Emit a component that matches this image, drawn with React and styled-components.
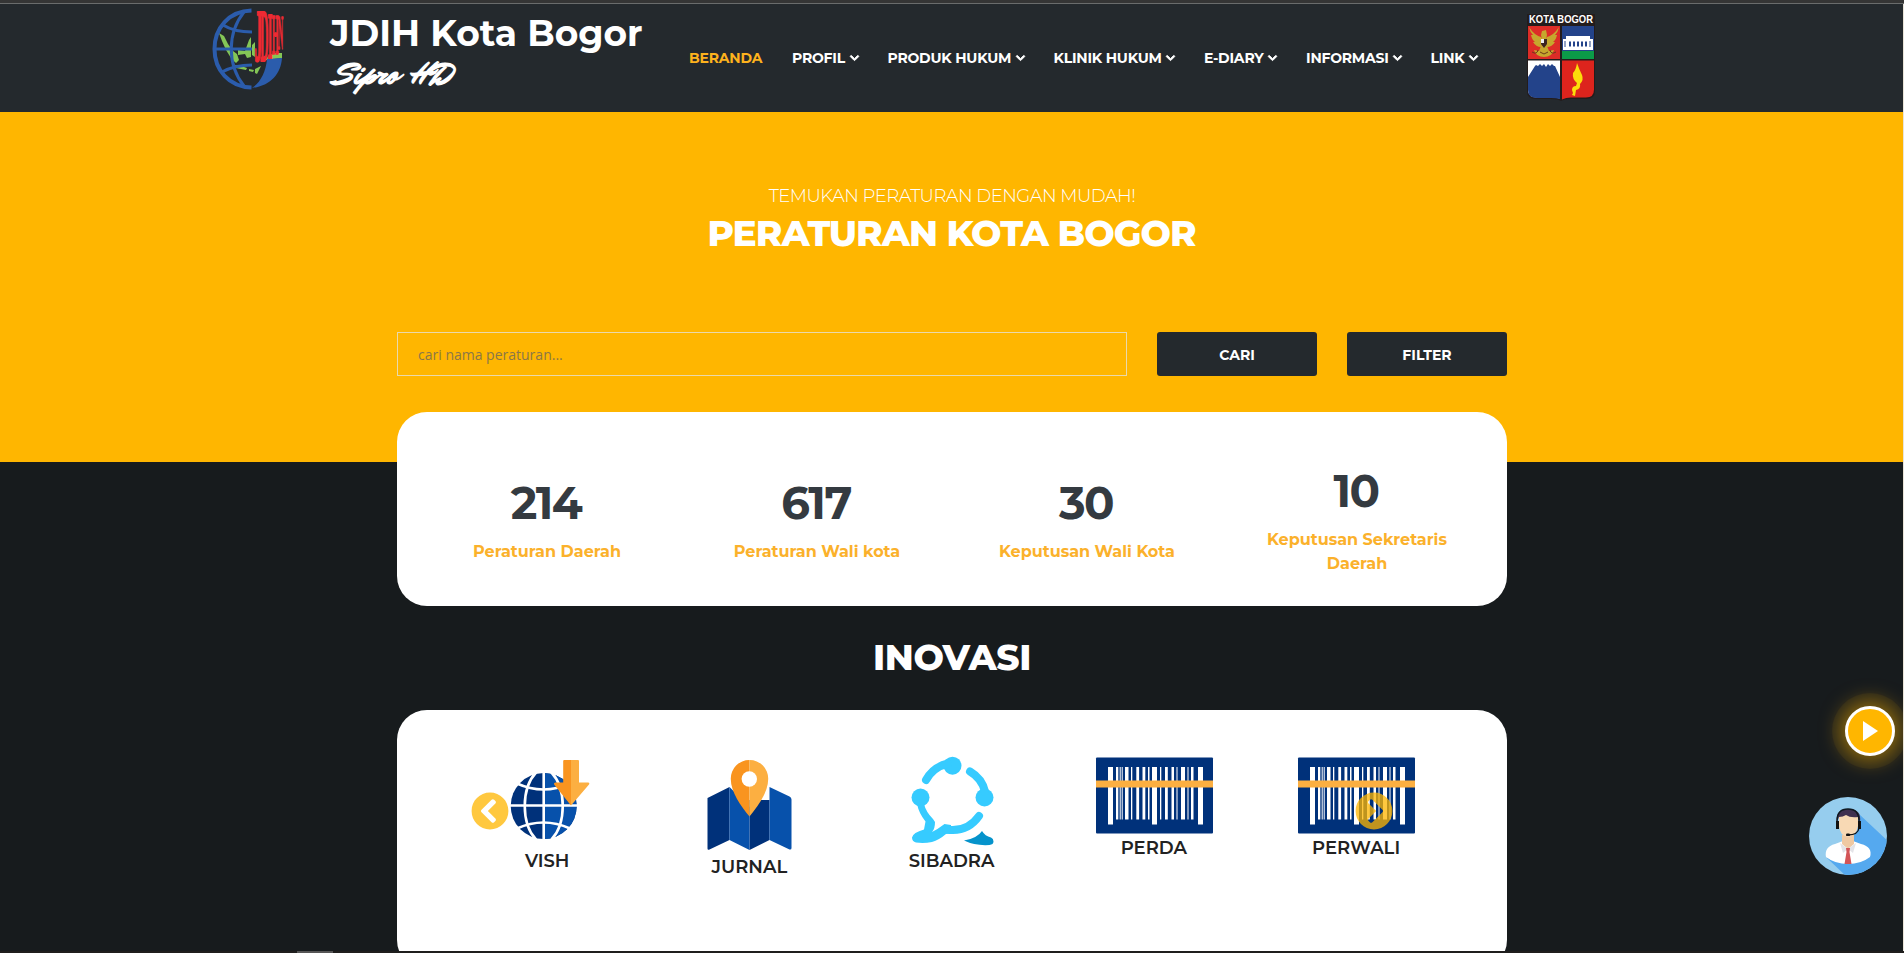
import React from "react";
import styled, { createGlobalStyle, css } from "styled-components";
import {
  FaChevronDown,
  FaChevronCircleLeft,
  FaChevronCircleRight,
} from "react-icons/fa";

const GlobalStyle = createGlobalStyle`
  * { box-sizing: border-box; }
  html, body { margin: 0; padding: 0; overflow: hidden; }
  body {
    background: #171b1d;
    font-family: Montserrat, Inter, "Liberation Sans", sans-serif;
    color: #fff;
  }
`;

const Page = styled.div`
  position: relative;
  width: 1904px;
  height: 953px;
  overflow: hidden;
  background: #171b1d;
`;

const TopStrip = styled.div`
  height: 4px;
  background: #353535;
  border-bottom: 1px solid #6a6c6c;
`;

const BottomStrip = styled.div`
  position: absolute;
  left: 0;
  right: 0;
  bottom: 0;
  height: 2px;
  padding-left: 297px;
  background: #1f1e1d;
`;

const StripThumb = styled.div`
  width: 36px;
  height: 2px;
  background: #565656;
`;

const EdgeLine = styled.div`
  position: absolute;
  top: 4px;
  right: 0;
  bottom: 2px;
  width: 1px;
  background: #e9e4d8;
`;

const Header = styled.header`
  display: flex;
  align-items: flex-start;
  height: 108px;
  padding-left: 212px;
  background: #24292d;
`;

const Brand = styled.div`
  width: 359px;
  margin-left: 46px;
  padding-top: 9px;
`;

const BrandName = styled.div`
  height: 40px;
  font-size: 36px;
  line-height: 40px;
  font-weight: 700;
`;

const BrandScript = styled.div`
  height: 36px;
  padding-left: 6px;
  margin-top: 4px;
  font-family: "Mr Dafoe", "Brush Script MT", Lato, cursive;
  font-size: 31px;
  line-height: 36px;
  font-weight: 700;
  word-spacing: 5px;
`;

const Nav = styled.nav`
  display: flex;
  gap: 29px;
  padding-top: 44px;
`;

const NavItem = styled.a`
  display: flex;
  align-items: center;
  height: 20px;
  font-size: 14px;
  line-height: 20px;
  font-weight: 700;
  letter-spacing: -0.2px;
  color: ${(p) => (p.$active ? "#fdb21d" : "#fff")};
  svg {
    flex: none;
    width: 9px;
    height: 10px;
    overflow: visible;
    stroke: currentColor;
    stroke-width: 44;
  }
`;

const NavText = styled.span`
  flex: none;
  width: ${(p) => p.$w}px;
  white-space: nowrap;
`;

const CityCrest = styled.div`
  margin: 9px 0 0 48px;
`;

const Hero = styled.section`
  display: flex;
  flex-direction: column;
  align-items: center;
  height: 350px;
  padding-top: 73px;
  background: #ffb600;
`;

const Tagline = styled.div`
  font-size: 18px;
  line-height: 23px;
  font-weight: 300;
  letter-spacing: -0.5px;
  color: #fff;
`;

const heading = css`
  margin: 0;
  font-size: 36px;
  line-height: 40px;
  font-weight: 800;
  text-align: center;
`;

const HeroTitle = styled.h1`
  ${heading}
  margin-top: 5px;
  padding-right: 1px;
  letter-spacing: -1px;
`;

const SearchRow = styled.form`
  display: grid;
  grid-template-columns: 730px 160px 160px;
  gap: 30px;
  margin-top: 79px;
`;

const SearchInput = styled.input`
  height: 44px;
  padding: 0 20px;
  border: 1px solid #ead9ab;
  background: transparent;
  font-family: "Open Sans", sans-serif;
  font-size: 14px;
  outline: none;
  &::placeholder {
    color: #8a7748;
    opacity: 1;
  }
`;

const DarkButton = styled.button`
  height: 44px;
  padding: 2px 0 0;
  border: 0;
  border-radius: 3px;
  background: #24292d;
  color: #fff;
  font-family: inherit;
  font-size: 14px;
  font-weight: 700;
`;

const Card = styled.section`
  width: 1110px;
  height: ${(p) => p.$h}px;
  margin: ${(p) => p.$top}px auto 0;
  border-radius: 30px;
  background: #fff;
`;

const StatsCard = styled(Card)`
  position: relative;
  display: grid;
  grid-template-columns: repeat(4, 1fr);
  align-items: center;
  padding: 22px 15px 0;
  text-align: center;
`;

const StatNumber = styled.div`
  padding-right: 2px;
  font-size: 45px;
  line-height: 54px;
  font-weight: 700;
  letter-spacing: -1.6px;
  color: #343a40;
`;

const StatLabel = styled.div`
  margin: 10px 30px 0;
  font-size: 16px;
  line-height: 24px;
  font-weight: 700;
  color: #fbb12b;
`;

const SectionTitle = styled.h2`
  ${heading}
  margin-top: 31px;
  letter-spacing: -0.4px;
`;

const SliderCard = styled(Card)`
  position: relative;
  padding: 46px 49px 0;
`;

const Slides = styled.div`
  display: grid;
  grid-template-columns: repeat(5, 202.25px);
`;

const Slide = styled.div`
  display: flex;
  flex-direction: column;
  align-items: center;
  svg {
    display: block;
    overflow: visible;
  }
`;

const SlideLabel = styled.div`
  font-size: 18px;
  line-height: 24px;
  font-weight: 600;
  color: #222;
`;

const SlideArrow = styled.button`
  position: absolute;
  top: 82px;
  ${(p) => (p.$side === "left" ? "left: 74px;" : "left: 958px;")}
  width: 38px;
  height: 38px;
  padding: 0;
  border: 0;
  background: none;
  color: #ffb600;
  opacity: 0.75;
  svg {
    display: block;
    width: 38px;
    height: 38px;
  }
`;

const PlayButton = styled.button`
  position: absolute;
  left: 1845px;
  top: 706px;
  display: flex;
  align-items: center;
  justify-content: center;
  width: 50px;
  height: 50px;
  padding: 0;
  border: 3px solid #fff;
  border-radius: 50%;
  background: #ffb600;
  box-shadow: 0 0 0 13px rgba(255, 182, 0, 0.06), 0 0 20px 5px rgba(255, 182, 0, 0.5);
`;

const SupportAvatar = styled.div`
  position: absolute;
  left: 1809px;
  top: 797px;
  width: 78px;
  height: 78px;
`;

const LOGO_LETTERS = [
  ["J", 253.5, 61, 1.6, 7.4],
  ["D", 259.3, 61, 1.15, 7.3],
  ["I", 266.8, 57.5, 1.2, 6.6],
  ["H", 271, 54, 0.85, 5.8],
  ["N", 276.8, 49, 0.75, 4.8],
];

function JdihLogo() {
  return (
    <svg width="72" height="90" viewBox="211 4 72 90" overflow="visible">
      <g fill="#84c656">
        <path d="M218 33l5 3 4 8 5 7 4 3 2 6-3 3-5-5-5-8-4-9z" />
        <path d="M237 50l7 1 4-11 2-3v20l-4 1-2-4-7 1z" />
        <path d="M229 53l4 3 3 6-4-1zM234 65l6 1 6 2-1 2-10-2zM248 69l5 1-1 2-4-1zM254 69l6-3-4 8-2-1zM251 45l3-3v15l-3-2z" />
        <path d="M267 56l7-3 7 0v5l-16 2z" />
      </g>
      <path d="M266 59l15-1c-1 16-12 28-30 30 8-5 14-16 15-29z" fill="#2b5cac" />
      <g fill="none" stroke="#2b5cac" strokeWidth="3">
        <path d="M250.500 10.500C228 11 213.500 28 213.500 49S228 87 250.500 87.500" strokeWidth="4" />
        <path d="M243 12C226 33 226 65 243 86" />
        <path d="M222 25c8 5 17 7 29 7M214 49h37M221 72c9-5 18-7 30-7" />
      </g>
      <g fill="#ed2a33" stroke="#ed2a33" strokeWidth="0.3" fontFamily="Liberation Serif, serif" fontWeight="700" fontSize="10">
        {LOGO_LETTERS.map(([ch, x, y, sx, sy]) => (
          <text key={ch} transform={`translate(${x} ${y}) scale(${sx} ${sy})`}>
            {ch}
          </text>
        ))}
      </g>
    </svg>
  );
}

function CrestIcon() {
  return (
    <svg width="70" height="88" viewBox="1525 13 70 88" overflow="visible">
      <path d="M1526 14h68v77q0 8-9 8h-15q-7 0-10 2-3-2-10-2h-15q-9 0-9-8z" fill="#231c1c" />
      <text x="1528" y="23" fill="#fff" fontFamily="Liberation Sans, sans-serif" fontWeight="700" fontSize="10.5" textLength="64" lengthAdjust="spacingAndGlyphs">KOTA BOGOR</text>
      <path d="M1527 26h32v33h-32z" fill="#dd2c27" />
      <path d="M1561 26h32v25h-32z" fill="#23438a" />
      <path d="M1561 51h32v8h-32z" fill="#0b9a48" />
      <path d="M1527 60.500h32v38q-4-1-9-1h-14q-9 0-9-8z" fill="#fff" />
      <path d="M1527 77l7-11 1-1 2 1 2-2 2 2 2-2 2 3 2-3 2 2 2-2 2 2 1 0 5 11v22q-4-1-9-1h-14q-9 0-9-8z" fill="#23438a" />
      <path d="M1561 60.500h32v29q0 8-8 8h-15q-5 0-9 2z" fill="#dd241d" />
      <path d="M1576 63q-1 7-4 10-1 6 4 10l-1 3q-4 0-4 4l1 3-1 2 3 1 1-6q5-1 4-6 4-4 2-9-3-6-5-12z" fill="#fbdd0a" />
      <g fill="#c6a72d">
        <path d="M1528 27q1 5 4 8l-2 0q1 5 4 7h-2q3 5 8 5l3-4-3-6q-7-2-12-10zM1558 27q-1 5-4 8h2q-1 5-4 7h2q-3 5-8 5l-3-4 3-6q7-2 12-10z" />
        <path d="M1541 31l4-1 1 5-1 5h-4l-1-5zM1540 46h6l2 5 5-1q-2 7-10 7t-10-7l5 1z" />
      </g>
      <path d="M1540 39h6v5l-3 4-3-4z" fill="#3b2420" />
      <path d="M1540 39h3v4h-3z" fill="#eee" />
      <path d="M1531 52q5 3 6-2M1555 52q-5 3-6-2M1539 52l4 2 4-2" fill="none" stroke="#6c3a18" strokeWidth="1" />
      <path d="M1565 36h24v3h3v11h-30V39h3z" fill="#fff" />
      <path d="M1568 41.500h2v5h-2zm4 0h2v5h-2zm4 0h2v5h-2zm4 0h2v5h-2zm4 0h2v5h-2zM1563.500 41h1v6h-1zm25 0h1v6h-1z" fill="#23438a" />
    </svg>
  );
}

function VishIcon() {
  return (
    <svg width="120" height="93" viewBox="487 756 120 93">
      <circle cx="543.700" cy="806" r="33" fill="#00317a" />
      <path d="M543.700 773a33 33 0 0 1 0 66z" fill="#0751ab" />
      <g fill="none" stroke="#fff" strokeWidth="2.600">
        <path d="M543.700 772v68M510 805.500h67" />
        <path d="M536 772.500c-15 16-15 51 0 67M551.500 772.500c15 16 15 51 0 67" />
        <path d="M517 783.500q26.500 12 53 0M517 828.500q26.500-12 53 0" />
      </g>
      <path d="M563.200 761q0-1 1-1H571v45.500l-16.500-20.500q-1.500-2 1-2.500h7.700z" fill="#f9941f" />
      <path d="M571 760h7q1 0 1 1v21.500h9q2 0 1 2L571 805.500z" fill="#fcaf41" />
    </svg>
  );
}

function JurnalIcon() {
  return (
    <svg width="120" height="99" viewBox="689.500 756 120 99">
      <path d="M708 798l22-11v53l-20 9.500q-2 1-2-1zM750 800h20v40l-20 10z" fill="#00317a" />
      <path d="M730 787l20 20v43l-20-10zM770 787l20 9.500q2 1 2 3V848q0 2-2 1.500L770 840z" fill="#0751ab" />
      <path d="M750 760a18.500 18.500 0 0 0-18.700 19c0 13 10 27 18.700 37.500z" fill="#f9941f" />
      <path d="M750 760a18.500 18.500 0 0 1 18.700 19c0 13-10 27-18.700 37.500z" fill="#fcaf41" />
      <circle cx="749.800" cy="779" r="7.700" fill="#fff" />
    </svg>
  );
}

function SibadraIcon() {
  return (
    <svg width="120" height="92.5" viewBox="891.500 756 120 92.500">
      <g fill="#36cbff">
        <circle cx="952" cy="765.700" r="9" />
        <circle cx="920" cy="797.500" r="9" />
        <circle cx="984" cy="797.500" r="9" />
        <path d="M916.500 804h7q2 8 9 15l2 3q0 7-3 10 6-3 12.500-8l6.500 1v8l-5 1q-7 6-14 8-8 1.500-16 .5-4-1-4-5 1-5 12-8l1.500-8q-6.500-8-8.500-17.500z" />
      </g>
      <g fill="none" stroke="#36cbff" strokeWidth="8" strokeLinecap="round">
        <path d="M925.500 780q7-13 22-16.500" />
        <path d="M969.500 771.500q12 7 15 20" />
        <path d="M978.500 816q-12 17-33 13.500" />
      </g>
      <path d="M981.500 831q3 5 9 6.500 2.500 1 2.500 4t-4 3.500q-14 1-25.500-4.500 13-2 18-9.500z" fill="#0593cb" />
    </svg>
  );
}

const BARS = [
  [12, 5, 1], [20, 2.3, 0], [23.7, 1, 0], [25.700, 1, 0], [29, 3.500, 0], [35, 1.300, 0],
  [40.300, 2.800, 0], [46.500, 2.800, 0], [52, 1.500, 0], [56, 5, 1], [64, 1.300, 0],
  [69, 2.800, 0], [75.500, 2.500, 0], [80.500, 1, 0], [85, 4, 0], [91.500, 1, 0],
  [95, 2.500, 0], [102, 5, 1],
];

function BarcodeIcon() {
  return (
    <svg width="120" height="80" viewBox="-2 -1.500 120 80">
      <rect width="117" height="76" rx="1" fill="#00317a" />
      {BARS.map(([x, w, tall]) => (
        <rect key={x} x={x} y="9.500" width={w} height={tall ? 57.5 : 52.500} fill="#fff" />
      ))}
      <rect y="23" width="117" height="7" fill="#fcaf41" />
    </svg>
  );
}

function AgentAvatar() {
  return (
    <svg width="78" height="78" viewBox="0 0 78 78">
      <defs>
        <clipPath id="avatarDisc"><circle cx="39" cy="39" r="39" /></clipPath>
      </defs>
      <g clipPath="url(#avatarDisc)">
        <rect width="78" height="78" fill="#96cdee" />
        <path d="M50 17l30 28v35H38L18 61l20-20z" fill="#55a9ef" />
        <path d="M17 60q-2-10 9-13l8-3h10l8 3q12 3 9 13-9 7-22 7t-22-7z" fill="#fff" />
        <path d="M33 38h12v9l-6 5-6-5z" fill="#efc9a2" />
        <path d="M31 46l8 6-5 4zM47 46l-8 6 5 4z" fill="#e4e4e8" />
        <path d="M37 51h4l-.500 4 2 12h-7l2-12z" fill="#d35457" />
        <path d="M30 18q0-6 9-6t10 6v11q-1 10-10 11-8-1-9-11z" fill="#f8d9b4" />
        <path d="M28 25q-2-12 11-13 14 0 12 13l-2-5q-8 1-12-2-3 2-7 2z" fill="#40304f" />
        <path d="M28 24q0-12 11-12t11 12" fill="none" stroke="#101820" strokeWidth="1.500" />
        <path d="M27 24h3v8h-3zM49 24h3v8h-3z" fill="#111" />
        <path d="M50 31q-1 7-11 7" fill="none" stroke="#111" strokeWidth="1.300" />
        <rect x="37" y="36.500" width="4" height="2.600" rx="1.200" fill="#111" />
      </g>
    </svg>
  );
}

const NAV = [
  { text: "BERANDA", w: 74, active: true },
  { text: "PROFIL", w: 57.5 },
  { text: "PRODUK HUKUM", w: 128 },
  { text: "KLINIK HUKUM", w: 112.5 },
  { text: "E-DIARY", w: 64 },
  { text: "INFORMASI", w: 86.5 },
  { text: "LINK", w: 38 },
];

const STATS = [
  { value: "214", label: "Peraturan Daerah" },
  { value: "617", label: "Peraturan Wali kota" },
  { value: "30", label: "Keputusan Wali Kota" },
  { value: "10", label: "Keputusan Sekretaris Daerah" },
];

const SLIDES = [
  { label: "VISH", Icon: VishIcon },
  { label: "JURNAL", Icon: JurnalIcon },
  { label: "SIBADRA", Icon: SibadraIcon },
  { label: "PERDA", Icon: BarcodeIcon },
  { label: "PERWALI", Icon: BarcodeIcon },
];

export default function App() {
  return (
    <Page>
      <GlobalStyle />
      <TopStrip />
      <Header>
        <JdihLogo />
        <Brand>
          <BrandName>JDIH Kota Bogor</BrandName>
          <BrandScript>Sipro HD</BrandScript>
        </Brand>
        <Nav>
          {NAV.map((n) => (
            <NavItem key={n.text} $active={n.active}>
              <NavText $w={n.w}>{n.text}</NavText>
              {!n.active && <FaChevronDown />}
            </NavItem>
          ))}
        </Nav>
        <CityCrest><CrestIcon /></CityCrest>
      </Header>

      <Hero>
        <Tagline>TEMUKAN PERATURAN DENGAN MUDAH!</Tagline>
        <HeroTitle>PERATURAN KOTA BOGOR</HeroTitle>
        <SearchRow>
          <SearchInput placeholder="cari nama peraturan..." />
          <DarkButton type="button">CARI</DarkButton>
          <DarkButton type="button">FILTER</DarkButton>
        </SearchRow>
      </Hero>

      <StatsCard $h={194} $top={-50}>
        {STATS.map((s) => (
          <div key={s.value}>
            <StatNumber>{s.value}</StatNumber>
            <StatLabel>{s.label}</StatLabel>
          </div>
        ))}
      </StatsCard>

      <SectionTitle>INOVASI</SectionTitle>

      <SliderCard $h={260} $top={33}>
        <Slides>
          {SLIDES.map(({ label, Icon }) => (
            <Slide key={label}>
              <Icon />
              <SlideLabel>{label}</SlideLabel>
            </Slide>
          ))}
        </Slides>
        <SlideArrow $side="left" aria-label="Previous"><FaChevronCircleLeft /></SlideArrow>
        <SlideArrow $side="right" aria-label="Next"><FaChevronCircleRight /></SlideArrow>
      </SliderCard>

      <PlayButton aria-label="Play">
        <svg width="16" height="20" viewBox="0 0 16 20"><path d="M1 0l15 10L1 20z" fill="#fff" /></svg>
      </PlayButton>
      <SupportAvatar><AgentAvatar /></SupportAvatar>
      <BottomStrip><StripThumb /></BottomStrip>
      <EdgeLine />
    </Page>
  );
}
